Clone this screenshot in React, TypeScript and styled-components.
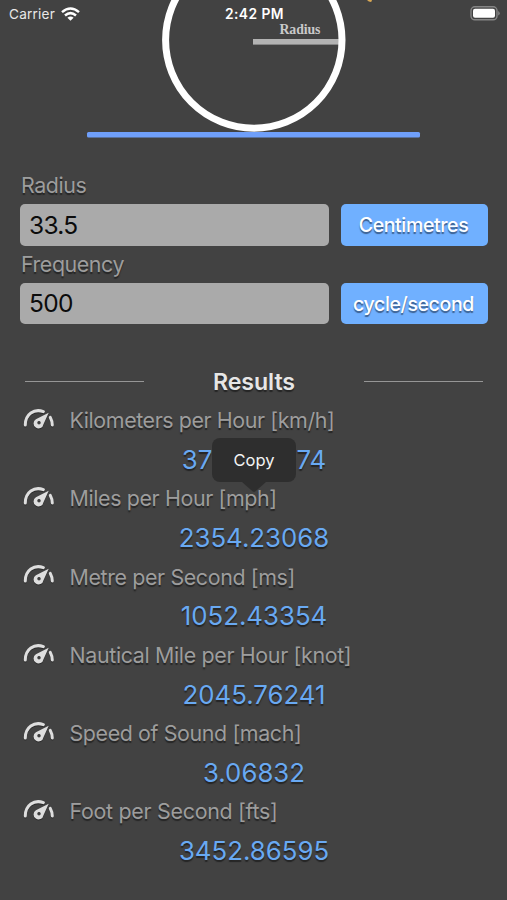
import React from 'react';
import styled, { createGlobalStyle } from 'styled-components';

const GlobalStyle = createGlobalStyle`
  * { box-sizing: border-box; }
  body { margin: 0; background: #424242; }
`;

const Screen = styled.main`
  position: relative;
  width: 507px;
  height: 900px;
  overflow: hidden;
  background: #424242;
  font-family: Inter, 'Liberation Sans', sans-serif;
`;

const StatusBar = styled.header`
  position: absolute;
  inset: 0 0 auto 0;
  height: 27px;
  padding: 0 7px 0 9px;
  display: grid;
  grid-template-columns: 1fr auto 1fr;
  align-items: center;
  color: #fff;
`;

const Carrier = styled.div`
  display: flex;
  align-items: center;
  gap: 6px;
  font-size: 13.6px;
  letter-spacing: 0.2px;
  color: #e8e8e8;
`;

const Clock = styled.div`
  font-size: 13.8px;
  font-weight: 600;
  letter-spacing: 0.45px;
`;

const Battery = styled.svg`
  justify-self: end;
`;

const Hero = styled.svg`
  display: block;
  width: 507px;
  height: 167px;
`;

const Form = styled.form`
  padding: 0 20px;
`;

const FieldLabel = styled.label`
  display: block;
  height: 37px;
  line-height: 37px;
  padding-left: 1px;
  font-size: 21.4px;
  letter-spacing: -0.43px;
  color: #9d9d9d;
  text-shadow: 0 1.5px 1px #252525;
`;

const FieldRow = styled.div`
  display: grid;
  grid-template-columns: 309px 147px;
  gap: 12px;
  height: 41.5px;
`;

const Input = styled.input`
  width: 100%;
  height: 100%;
  border: 0;
  border-radius: 5px;
  padding: 0 9px;
  background: #aaa;
  color: #0c0c0c;
  font: 400 24.5px Inter, sans-serif;
  letter-spacing: -0.7px;
  outline: none;
`;

const UnitButton = styled.button`
  border: 0;
  border-radius: 5px;
  padding: 1px 2px 0 0;
  background: #70b0ff;
  color: #fff;
  font: 500 19.5px Inter, sans-serif;
  letter-spacing: -0.36px;
  text-shadow: 0 1.5px 1px #3c5f8e;
  white-space: nowrap;
`;

const ResultsHeading = styled.div`
  display: grid;
  grid-template-columns: 119px 1fr 119px;
  align-items: center;
  height: 40px;
  margin-top: 37.5px;
  padding: 0 24px 0 25px;
`;

const Rule = styled.hr`
  width: 100%;
  height: 1.5px;
  margin: 0;
  border: 0;
  background: #969696;
`;

const Title = styled.h2`
  margin: 0;
  text-align: center;
  font-size: 23.2px;
  font-weight: 600;
  letter-spacing: -0.1px;
  color: #e6e6e6;
  text-shadow: 0 1.5px 1px #252525;
`;

const ResultList = styled.section`
  display: grid;
  grid-auto-rows: 78.2px;
`;

const Result = styled.article`
  position: relative;
  display: grid;
  grid-template-rows: 38px 40.2px;
`;

const ResultLabel = styled.div<{ $spacing: number }>`
  display: flex;
  align-items: center;
  gap: 14.5px;
  padding: 0 0 0.5px 23px;
  font-size: 21.4px;
  letter-spacing: ${(p) => p.$spacing}px;
  color: #9d9d9d;
  text-shadow: 0 1.5px 1px #252525;
  white-space: nowrap;
`;

const GaugeSvg = styled.svg`
  flex: none;
  margin-bottom: 2.4px;
  filter: drop-shadow(0 1px 0.5px #2a2a2a);
`;

const ResultValue = styled.div`
  display: flex;
  align-items: center;
  justify-content: center;
  padding-left: 1px;
  font-size: 25.8px;
  color: #69a9f2;
  text-shadow: 0 1.5px 1px #252525;
`;

const CopyMenu = styled.div`
  position: absolute;
  top: 36.5px;
  left: 212px;
  width: 84px;
  height: 44px;
  display: flex;
  align-items: center;
  justify-content: center;
  border-radius: 8px;
  background: #2e2e2e;
  color: #f4f4f4;
  font-size: 16.5px;
  z-index: 1;
`;

const MenuArrow = styled.svg`
  position: absolute;
  top: 44px;
  left: 30px;
`;

const Wifi = () => (
  <svg width="19" height="14" viewBox="0 0 19 14">
    <g fill="none" stroke="#fff" strokeWidth="2.5">
      <path d="M1 5.1Q9.5-2.2 18 5.1" />
      <path d="M4 8.5Q9.5 3.7 15 8.5" />
    </g>
    <path d="M6.4 10.7Q9.5 8.1 12.6 10.7L9.5 13.8Z" fill="#fff" />
  </svg>
);

const Gauge = () => (
  <GaugeSvg width="32" height="22" viewBox="0 0 32 22">
    <g fill="none" stroke="#dedede" strokeWidth="3" strokeLinecap="round">
      <path d="M2.3 17C2.3 6.3 11 .3 20.4 3.6" />
      <path d="M27.3 9.4Q29.2 12.8 29.3 17" />
    </g>
    <path
      fillRule="evenodd"
      fill="#dedede"
      d="M25.7 4.7 12.9 11.2A5 5 0 1 0 20.5 16.2ZM16 13A1.7 1.7 0 1 1 16 16.4A1.7 1.7 0 1 1 16 13Z"
    />
  </GaugeSvg>
);

const results = [
  { label: 'Kilometers per Hour [km/h]', value: '3788.76074', spacing: -0.4 },
  { label: 'Miles per Hour [mph]', value: '2354.23068', spacing: -0.37 },
  { label: 'Metre per Second [ms]', value: '1052.43354', spacing: -0.37 },
  { label: 'Nautical Mile per Hour [knot]', value: '2045.76241', spacing: -0.34 },
  { label: 'Speed of Sound [mach]', value: '3.06832', spacing: -0.38 },
  { label: 'Foot per Second [fts]', value: '3452.86595', spacing: -0.28 },
];

export default function App() {
  return (
    <>
      <GlobalStyle />
      <Screen>
        <Hero viewBox="0 0 507 167">
          <path d="M367 0h5l-.8 2-2.4-.4Z" fill="#d9a854" />
          <rect x="253" y="39" width="87" height="5.6" fill="#b3b3b3" />
          <circle cx="253.8" cy="40" r="88.2" fill="none" stroke="#fff" strokeWidth="7" />
          <rect x="87" y="132" width="333" height="5.4" rx="1.5" fill="#6f9ffa" />
          <text
            x="279.5"
            y="34"
            fill="#c9c9c9"
            fontFamily="Liberation Serif, serif"
            fontSize="13.8"
            fontWeight="700"
            letterSpacing="-0.1"
          >
            Radius
          </text>
        </Hero>
        <StatusBar>
          <Carrier>
            Carrier <Wifi />
          </Carrier>
          <Clock>2:42 PM</Clock>
          <Battery width="30" height="15" viewBox="0 0 30 15">
            <rect x="1" y=".8" width="26" height="13" rx="3.8" fill="none" stroke="#858585" strokeWidth="1.4" />
            <rect x="3" y="2.8" width="22" height="9" rx="2" fill="#fff" />
            <path d="M28.2 5v4.6q1.5-.7 1.5-2.3T28.2 5Z" fill="#858585" />
          </Battery>
        </StatusBar>
        <Form onSubmit={(e) => e.preventDefault()}>
          <FieldLabel htmlFor="radius">Radius</FieldLabel>
          <FieldRow>
            <Input id="radius" defaultValue="33.5" />
            <UnitButton type="button">Centimetres</UnitButton>
          </FieldRow>
          <FieldLabel htmlFor="frequency">Frequency</FieldLabel>
          <FieldRow>
            <Input id="frequency" defaultValue="500" />
            <UnitButton type="button">cycle/second</UnitButton>
          </FieldRow>
        </Form>
        <ResultsHeading>
          <Rule />
          <Title>Results</Title>
          <Rule />
        </ResultsHeading>
        <ResultList>
          {results.map((r, i) => (
            <Result key={r.label}>
              <ResultLabel $spacing={r.spacing}>
                <Gauge />
                {r.label}
              </ResultLabel>
              <ResultValue>{r.value}</ResultValue>
              {i === 0 && (
                <CopyMenu>
                  Copy
                  <MenuArrow width="24" height="10" viewBox="0 0 24 10">
                    <path d="M0 0h24L13.5 9.2Q12 10.3 10.5 9.2Z" fill="#2e2e2e" />
                  </MenuArrow>
                </CopyMenu>
              )}
            </Result>
          ))}
        </ResultList>
      </Screen>
    </>
  );
}
